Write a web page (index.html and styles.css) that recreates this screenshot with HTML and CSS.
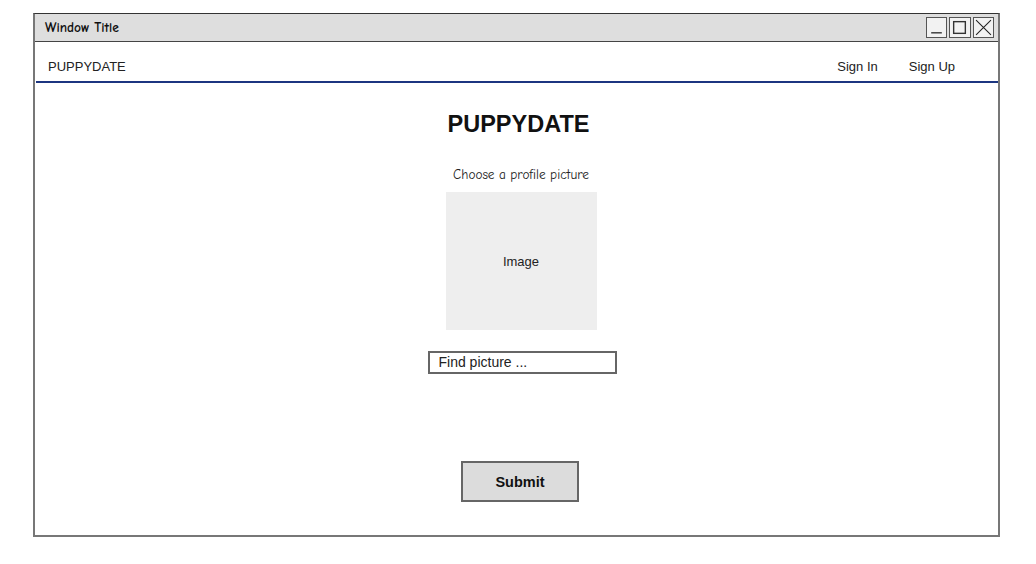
FILE: index.html
```html
<!DOCTYPE html>
<html>
<head>
<meta charset="utf-8">
<link rel="stylesheet" href="styles.css">
</head>
<body>
<div class="window">
  <div class="titlebar">
    <span class="title">Window Title</span>
    <div class="controls">
      <div class="ctl"><svg width="17" height="17" viewBox="0 0 16 16"><line x1="3" y1="13" x2="13" y2="13" stroke="#333" stroke-width="1.3"/></svg></div>
      <div class="ctl"><svg width="17" height="17" viewBox="0 0 16 16"><rect x="2.5" y="2.5" width="11" height="11" fill="none" stroke="#333" stroke-width="1.3"/></svg></div>
      <div class="ctl"><svg width="17" height="17" viewBox="0 0 16 16"><path d="M1 1L15 15M15 1L1 15" stroke="#222" stroke-width="1"/></svg></div>
    </div>
  </div>
  <nav class="nav">
    <span class="brand">PUPPYDATE</span>
    <div class="links"><span>Sign In</span><span>Sign Up</span></div>
  </nav>
  <main class="content">
    <h1 class="heading">PUPPYDATE</h1>
    <p class="sub">Choose a profile picture</p>
    <div class="image">Image</div>
    <div class="input">Find picture ...</div>
    <div class="button">Submit</div>
  </main>
</div>
</body>
</html>
```
FILE: styles.css
```css
html, body { margin: 0; padding: 0; background: #fff; }
body { padding: 13px 0 0 33px; font-family: "Liberation Sans", Arial, sans-serif; }
.window {
  width: 963px; height: 521px;
  border: 2px solid #777; border-top: 1px solid #333;
  display: flex; flex-direction: column;
  box-sizing: content-box;
}
.titlebar {
  height: 27px; background: #dedede; border-bottom: 1px solid #444;
  display: flex; align-items: center; justify-content: space-between;
  padding: 0 4px 0 10px;
}
.title { font-family: "Comic Neue", "DejaVu Sans", sans-serif; font-weight: bold; font-size: 13.5px; color: #111; }
.controls { display: flex; gap: 2px; }
.ctl {
  width: 19.5px; height: 19px; border: 1.5px solid #555; background: #f2f2f2;
  display: flex; align-items: center; justify-content: center;
}
.nav {
  border-bottom: 2px solid #1c3580; margin: 0 0 0 1px;
  display: flex; align-items: center; justify-content: space-between;
  font-size: 13px; color: #222; padding: 10px 43px 0 12px; box-sizing: border-box; height: 41px;
}
.links { display: flex; gap: 31px; }
.content { display: flex; flex-direction: column; align-items: center; padding-left: 9px; }
.heading { margin: 27px 0 0 -5px; font-size: 23.5px; font-weight: bold; color: #111; line-height: 28px; }
.sub { margin: 29px 0 0; font-family: "Comic Neue", "DejaVu Sans", sans-serif; font-size: 13.3px; color: #222; line-height: 16px; }
.image {
  margin-top: 9px; width: 151px; height: 138px; background: #eeeeee;
  display: flex; align-items: center; justify-content: center; font-size: 13px; color: #222;
}
.input {
  margin-top: 21px; width: 176px; height: 19px; border: 2px solid #666;
  font-size: 14px; color: #222; padding-left: 9px; line-height: 19px; box-sizing: content-box;
  margin-left: 2px;
}
.button {
  margin-top: 87px; width: 114px; height: 37px; background: #dcdcdc; border: 2px solid #666;
  display: flex; align-items: center; justify-content: center;
  font-size: 14.5px; font-weight: bold; color: #111; margin-left: -2px;
}
```
